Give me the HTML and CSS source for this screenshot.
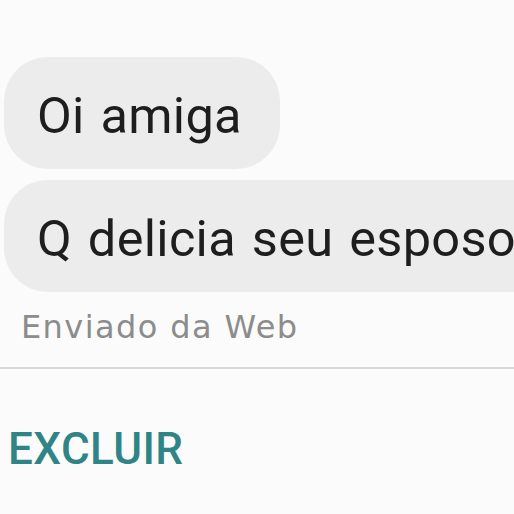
FILE: index.html
```html
<!DOCTYPE html>
<html>
<head>
<meta charset="utf-8">
<link rel="stylesheet" href="styles.css">
</head>
<body>
<div class="chat">
  <div class="bubble first"><span class="msg">Oi amiga</span></div>
  <div class="bubble second"><span class="msg">Q delicia seu esposo</span></div>
  <div class="meta">Enviado da Web</div>
</div>
<div class="divider"></div>
<div class="actions">
  <span class="btn">EXCLUIR</span>
</div>
</body>
</html>
```

FILE: styles.css
```css
html, body {
  margin: 0;
  padding: 0;
  background: #fbfbfb;
  width: 514px;
  height: 514px;
  overflow: hidden;
}
.chat {
  padding-top: 57px;
  display: flex;
  flex-direction: column;
  gap: 11px;
}
.bubble {
  background: #ececec;
  border-radius: 44px;
  height: 112px;
  display: flex;
  align-items: center;
  box-sizing: border-box;
  padding-left: 33px;
  margin-left: 4px;
  overflow: hidden;
}
.bubble.first {
  width: 276px;
}
.bubble.second {
  align-self: stretch;
  border-radius: 44px 0 0 44px;
}
.msg {
  font-family: Roboto, "Liberation Sans", sans-serif;
  font-size: 50.5px;
  letter-spacing: 0.3px;
  word-spacing: 3px;
  color: #1e1e1e;
  white-space: nowrap;
  position: relative;
  top: 2px;
}
.meta {
  font-family: "DejaVu Sans", sans-serif;
  font-size: 32px;
  letter-spacing: 1.4px;
  color: #8c8c8c;
  margin-left: 21px;
  margin-top: 5px;
  height: 59px;
}
.divider {
  height: 2px;
  background: #dadada;
}
.actions {
  padding: 54px 0 0 8px;
}
.btn {
  font-family: Roboto, "Liberation Sans", sans-serif;
  font-weight: 500;
  font-size: 44px;
  color: #2f8585;
  letter-spacing: 0.4px;
}
```
